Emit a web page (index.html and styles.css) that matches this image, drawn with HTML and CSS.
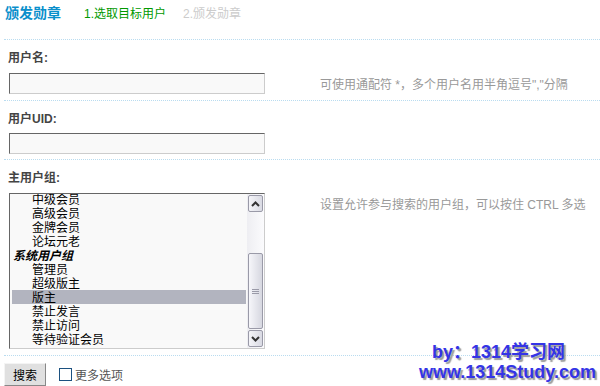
FILE: index.html
```html
<!DOCTYPE html>
<html lang="zh-CN">
<head>
    <meta charset="UTF-8">
    <meta name="viewport" content="width=device-width, initial-scale=1.0">
    <title>颁发勋章</title>
    <link rel="stylesheet" href="styles.css">
</head>
<body>

<div class="header">
    <h3>颁发勋章</h3>
    <span class="step current">1.选取目标用户</span>
    <span class="step">2.颁发勋章</span>
</div>

<div class="row">
    <div class="label">用户名:</div>
    <div class="field">
        <input type="text" class="txt">
        <span class="tip">可使用通配符 *，多个用户名用半角逗号","分隔</span>
    </div>
</div>

<div class="row short">
    <div class="label">用户UID:</div>
    <div class="field">
        <input type="text" class="txt">
    </div>
</div>

<div class="row">
    <div class="label">主用户组:</div>
    <div class="field top">
        <div class="listbox">
            <ul class="options">
                <li class="opt">中级会员</li>
                <li class="opt">高级会员</li>
                <li class="opt">金牌会员</li>
                <li class="opt">论坛元老</li>
                <li class="group">系统用户组</li>
                <li class="opt">管理员</li>
                <li class="opt">超级版主</li>
                <li class="opt selected">版主</li>
                <li class="opt">禁止发言</li>
                <li class="opt">禁止访问</li>
                <li class="opt">等待验证会员</li>
            </ul>
            <div class="scrollbar">
                <div class="sb-btn">
                    <svg width="9" height="6" viewBox="0 0 9 6"><path d="M1 5 L4.5 1.5 L8 5" fill="none" stroke="#333" stroke-width="2"/></svg>
                </div>
                <div class="sb-track"></div>
                <div class="sb-thumb"><span class="grip"></span></div>
                <div class="sb-btn">
                    <svg width="9" height="6" viewBox="0 0 9 6"><path d="M1 1 L4.5 4.5 L8 1" fill="none" stroke="#333" stroke-width="2"/></svg>
                </div>
            </div>
        </div>
        <span class="tip">设置允许参与搜索的用户组，可以按住 CTRL 多选</span>
    </div>
</div>

<div class="footer">
    <button class="btn">搜索</button>
    <label class="more"><span class="chk"></span>更多选项</label>
</div>

<div class="mark">
    <div>by：1314学习网</div>
    <div>www.1314Study.com</div>
</div>

</body>
</html>
```

FILE: styles.css
```css
body {
    margin: 0;
    font-family: Arial, "Liberation Sans", "Noto Sans CJK SC", sans-serif;
    font-size: 12px;
    color: #333;
    background-color: #ffffff;
    position: relative;
    height: 386px;
    overflow: hidden;
}

.header {
    display: flex;
    align-items: baseline;
    height: 35px;
    padding: 4px 0 0 1px;
    margin-left: 4px;
    border-bottom: 1px dotted #b9dcf0;
}

.header h3 {
    margin: 0 23px 0 0;
    font-size: 14px;
    line-height: 18px;
    color: #0a8fcb;
}

.step {
    color: #cccccc;
    margin-right: 17px;
}

.step.current {
    color: #009900;
}

.row {
    margin-left: 4px;
    padding: 10px 0 6px 4px;
    border-bottom: 1px dotted #b9dcf0;
}

.row.short {
    padding-bottom: 5px;
}

.label {
    font-weight: bold;
    color: #444;
    line-height: 16px;
    margin-bottom: 7px;
}

.row.short .label {
    margin-bottom: 6px;
}

.field {
    display: flex;
    align-items: center;
}

.field.top {
    align-items: flex-start;
}

.txt {
    width: 256px;
    height: 21px;
    box-sizing: border-box;
    margin: 0 0 0 1px;
    padding: 2px;
    background-color: #f9f9f9;
    border: 1px solid #cccccc;
    border-top-color: #666666;
    border-left-color: #666666;
    font-size: 12px;
}

.tip {
    color: #999999;
    margin-left: 55px;
}

.field.top .tip {
    margin-top: 2px;
}

.listbox {
    display: flex;
    width: 256px;
    height: 156px;
    box-sizing: border-box;
    margin-left: 1px;
    border: 1px solid #cccccc;
    border-top-color: #666666;
    border-left-color: #666666;
    background-color: #f9f9f9;
    overflow: hidden;
}

.options {
    list-style: none;
    margin: -2px 0 0 0;
    padding: 0 1px 0 2px;
    flex: 1;
    font-family: "Noto Sans CJK SC", sans-serif;
    color: #000;
}

.options li {
    height: 14px;
    line-height: 14px;
    white-space: nowrap;
}

.opt {
    padding-left: 20px;
}

.group {
    padding-left: 1px;
    font-weight: bold;
    font-style: italic;
}

.opt.selected {
    background-color: #b2b4bf;
}

.scrollbar {
    width: 17px;
    display: flex;
    flex-direction: column;
    background: linear-gradient(to right, #eeeef2, #fbfbfd);
}

.sb-btn {
    height: 15px;
    margin: 1px;
    border: 1px solid #9a9aa8;
    border-radius: 2px;
    background: linear-gradient(to right, #f4f4f8, #d9dae3);
    display: flex;
    align-items: center;
    justify-content: center;
}

.sb-track {
    height: 40px;
}

.sb-thumb {
    flex: 1;
    margin: 0 1px;
    border: 1px solid #9a9aa8;
    border-radius: 2px;
    background: linear-gradient(to right, #f6f6fa, #d6d7e0);
    display: flex;
    align-items: center;
    justify-content: center;
}

.grip {
    width: 7px;
    height: 5px;
    border-top: 1px solid #9a9aa8;
    border-bottom: 1px solid #9a9aa8;
    box-sizing: border-box;
    background: linear-gradient(#9a9aa8, #9a9aa8) center / 100% 1px no-repeat;
}

.footer {
    display: flex;
    align-items: center;
    padding: 7px 0 0 4px;
}

.btn {
    width: 42px;
    height: 23px;
    padding: 0;
    font-family: "Noto Sans CJK SC", sans-serif;
    font-size: 12px;
    color: #000;
    background-color: #e0e0e0;
    border: 1px solid #888;
    border-top-color: #f4f4f4;
    border-left-color: #f4f4f4;
    margin-right: 13px;
}

.more {
    display: flex;
    align-items: center;
    color: #555;
}

.chk {
    width: 13px;
    height: 13px;
    box-sizing: border-box;
    border: 1px solid #1c5180;
    background-color: #fff;
    margin-right: 3px;
}

.mark {
    position: absolute;
    right: 4px;
    top: 342px;
    font-family: Arial, "Liberation Sans", "Noto Sans CJK SC", sans-serif;
    font-size: 18px;
    font-weight: bold;
    line-height: 20px;
    color: #3434e6;
    text-align: right;
    text-shadow: 2px 2px 1px #9c9c9c;
}

.mark div:first-child {
    margin-right: 31px;
}
```
